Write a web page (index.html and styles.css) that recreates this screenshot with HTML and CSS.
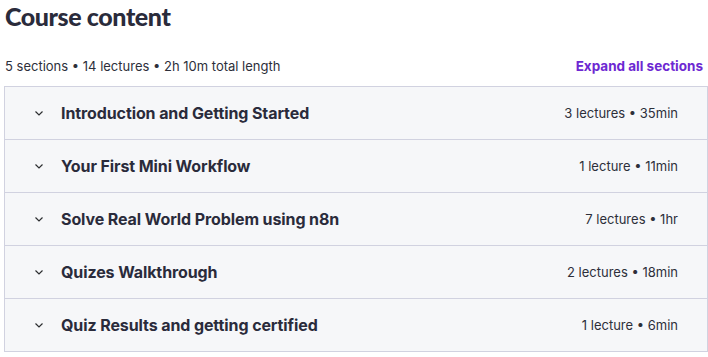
FILE: index.html
```html
<!DOCTYPE html>
<html>
<head>
<meta charset="utf-8">
<link rel="stylesheet" href="styles.css">
</head>
<body>
<div class="wrap">
  <h2 class="title">Course content</h2>
  <div class="meta">
    <span class="stats">5 sections • 14 lectures • 2h 10m total length</span>
    <button class="expand">Expand all sections</button>
  </div>
  <div class="sections">
    <div class="row">
      <svg class="chev" viewBox="0 0 12 12" width="12" height="12"><path d="M2.5 4.5 L6 8 L9.5 4.5" fill="none" stroke="#2d2f31" stroke-width="1.2"/></svg>
      <span class="name">Introduction and Getting Started</span>
      <span class="info">3 lectures • 35min</span>
    </div>
    <div class="row">
      <svg class="chev" viewBox="0 0 12 12" width="12" height="12"><path d="M2.5 4.5 L6 8 L9.5 4.5" fill="none" stroke="#2d2f31" stroke-width="1.2"/></svg>
      <span class="name">Your First Mini Workflow</span>
      <span class="info">1 lecture • 11min</span>
    </div>
    <div class="row">
      <svg class="chev" viewBox="0 0 12 12" width="12" height="12"><path d="M2.5 4.5 L6 8 L9.5 4.5" fill="none" stroke="#2d2f31" stroke-width="1.2"/></svg>
      <span class="name">Solve Real World Problem using n8n</span>
      <span class="info">7 lectures • 1hr</span>
    </div>
    <div class="row">
      <svg class="chev" viewBox="0 0 12 12" width="12" height="12"><path d="M2.5 4.5 L6 8 L9.5 4.5" fill="none" stroke="#2d2f31" stroke-width="1.2"/></svg>
      <span class="name">Quizes Walkthrough</span>
      <span class="info">2 lectures • 18min</span>
    </div>
    <div class="row">
      <svg class="chev" viewBox="0 0 12 12" width="12" height="12"><path d="M2.5 4.5 L6 8 L9.5 4.5" fill="none" stroke="#2d2f31" stroke-width="1.2"/></svg>
      <span class="name">Quiz Results and getting certified</span>
      <span class="info">1 lecture • 6min</span>
    </div>
  </div>
</div>
</body>
</html>
```
FILE: styles.css
```css
* { box-sizing: border-box; }
html, body { margin: 0; padding: 0; background: #fff; }
body {
  font-family: Inter, "Noto Sans", sans-serif;
  color: #2d2f3a;
}
.wrap {
  padding: 0 0 0 4px;
  width: 708px;
}
.title {
  margin: 0;
  padding-left: 1px;
  font-family: Lato, "Noto Sans", sans-serif;
  font-size: 25px;
  line-height: 32px;
  font-weight: 900;
  letter-spacing: -0.4px;
  color: #2a2b3b;
}
.meta {
  display: flex;
  justify-content: space-between;
  align-items: center;
  height: 22px;
  margin-top: 23px;
  margin-bottom: 9px;
  padding-left: 1px;
  padding-right: 5px;
}
.stats {
  font-size: 13px;
  color: #2d2f3a;
}
.expand {
  border: none;
  background: none;
  padding: 0;
  font-family: inherit;
  font-size: 13.5px;
  font-weight: 700;
  color: #6d28d2;
  cursor: pointer;
}
.sections {
  border: 1px solid #d1d2e0;
  width: 704px;
}
.row {
  display: flex;
  align-items: center;
  height: 53px;
  background: #f6f7f9;
  border-bottom: 1px solid #d1d2e0;
  padding: 0 29px 0 28px;
}
.row:last-child {
  height: 52px;
  border-bottom: none;
}
.chev {
  flex: none;
  margin-right: 16px;
}
.name {
  flex: 1;
  font-size: 16px;
  font-weight: 700;
  letter-spacing: -0.1px;
  color: #2a2b3b;
}
.info {
  font-size: 13px;
  color: #2d2f3a;
}
```
